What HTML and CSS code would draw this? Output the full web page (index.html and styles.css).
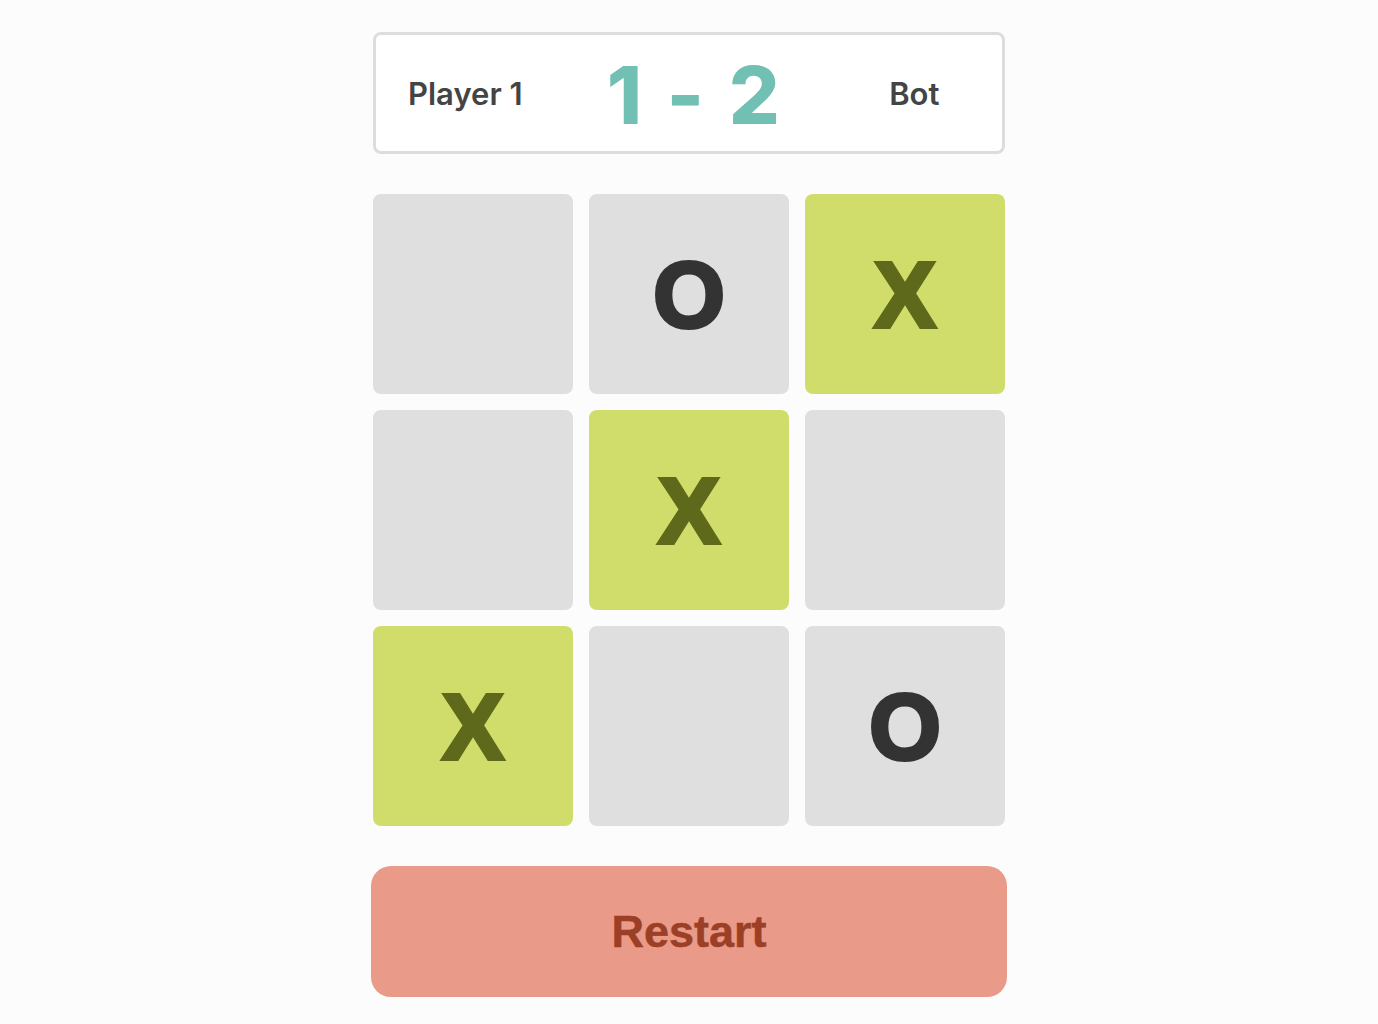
FILE: index.html
```html
<!DOCTYPE html>
<html>
<head>
<meta charset="utf-8">
<link rel="stylesheet" href="styles.css">
</head>
<body>
<main class="game">
  <section class="scoreboard">
    <span class="player player-left">Player 1</span>
    <span class="score">1 - 2</span>
    <span class="player player-right">Bot</span>
  </section>
  <section class="board">
    <div class="cell"></div>
    <div class="cell o">O</div>
    <div class="cell x">X</div>
    <div class="cell"></div>
    <div class="cell x">X</div>
    <div class="cell"></div>
    <div class="cell x">X</div>
    <div class="cell"></div>
    <div class="cell o">O</div>
  </section>
  <button class="restart">Restart</button>
</main>
</body>
</html>
```
FILE: styles.css
```css
html, body {
  margin: 0;
  padding: 0;
  background: #fcfcfc;
}
.game {
  width: 632px;
  margin: 0 auto;
  padding-top: 32px;
  display: flex;
  flex-direction: column;
  align-items: center;
}
.scoreboard {
  box-sizing: border-box;
  width: 632px;
  height: 122px;
  border: 3px solid #dddddd;
  border-radius: 8px;
  background: #ffffff;
  display: flex;
  align-items: center;
  padding-left: 32px;
  font-family: Inter, "Noto Sans", sans-serif;
}
.player {
  font-size: 31px;
  font-weight: 600;
  color: #444444;
}
.score {
  margin-left: 84px;
  font-size: 80px;
  font-weight: 800;
  color: #72bfb3;
  line-height: 1;
  padding-top: 4px;
  letter-spacing: 3.5px;
}
.player-right {
  margin-left: 106px;
}
.board {
  margin-top: 40px;
  display: grid;
  grid-template-columns: repeat(3, 200px);
  grid-template-rows: repeat(3, 200px);
  gap: 16px;
}
.cell {
  background: #dfdfdf;
  border-radius: 8px;
  display: flex;
  align-items: center;
  justify-content: center;
  font-family: "Liberation Sans", Arial, sans-serif;
  font-weight: 700;
  font-size: 92px;
  line-height: 1;
  padding-top: 2px;
  box-sizing: border-box;
  -webkit-text-stroke: 4px currentColor;
}
.cell.x {
  background: #d1dd6a;
  color: #5e691b;
}
.cell.o {
  color: #333333;
}
.restart {
  margin-top: 40px;
  width: 636px;
  height: 131px;
  border: none;
  border-radius: 20px;
  background: #ea9a88;
  color: #9b3f26;
  font-family: "Liberation Sans", Arial, sans-serif;
  font-weight: 700;
  font-size: 45px;
  -webkit-text-stroke: 0.5px currentColor;
  cursor: pointer;
}
```
